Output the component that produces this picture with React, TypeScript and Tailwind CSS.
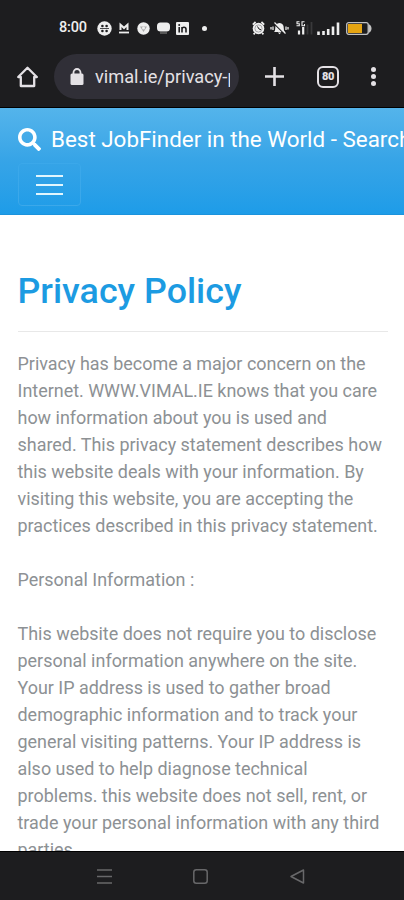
import React from 'react';
import { FaSearch } from 'react-icons/fa';

const paragraphs: string[][] = [
  [
    'Privacy has become a major concern on the',
    'Internet. WWW.VIMAL.IE knows that you care',
    'how information about you is used and',
    'shared. This privacy statement describes how',
    'this website deals with your information. By',
    'visiting this website, you are accepting the',
    'practices described in this privacy statement.',
  ],
  ['Personal Information :'],
  [
    'This website does not require you to disclose',
    'personal information anywhere on the site.',
    'Your IP address is used to gather broad',
    'demographic information and to track your',
    'general visiting patterns. Your IP address is',
    'also used to help diagnose technical',
    'problems. this website does not sell, rent, or',
    'trade your personal information with any third',
    'parties.',
  ],
];

const StatusBar: React.FC = () => (
  <div className="flex h-[54px] items-center pt-[2px] pl-[59px] text-[#eeeeee]">
    <span className="w-[38px] text-[14.5px] leading-none font-medium tracking-[-0.2px]">8:00</span>
    <svg className="h-[15px] w-[15px] shrink-0" viewBox="0 0 15 15">
      <circle cx="7.5" cy="7.5" r="7.2" fill="currentColor" />
      <g fill="#1d1d1f">
        <circle cx="5.4" cy="5" r="1.3" />
        <circle cx="9.6" cy="5" r="1.3" />
        <circle cx="5.4" cy="10" r="1.3" />
        <circle cx="9.6" cy="10" r="1.3" />
      </g>
      <path d="M3 7.5h9" stroke="#1d1d1f" strokeWidth="0.8" />
    </svg>
    <svg className="ml-[7px] h-[12px] w-[10px] shrink-0" viewBox="0 0 10 12">
      <path d="M0.5 8V0.500l4.5 4 4.5-4V8H7.500V5L5 7.500 2.500 5v3z" fill="currentColor" />
      <path d="M0 10.5h10" stroke="currentColor" strokeWidth="1.8" />
    </svg>
    <svg className="ml-[8px] h-[13px] w-[13px] shrink-0" viewBox="0 0 13 13">
      <circle cx="6.5" cy="6.5" r="6.2" fill="currentColor" />
      <path d="M3 4.500h7L6.500 10z" fill="#aaaaaa" />
      <circle cx="6.5" cy="6" r="1.5" fill="#eeeeee" />
    </svg>
    <svg className="ml-[7px] h-[13px] w-[13px] shrink-0" viewBox="0 0 13 13">
      <rect x="0" y="0.5" width="13" height="9" rx="3.5" fill="currentColor" />
      <path d="M3 11h7" stroke="#6a6a6a" strokeWidth="1.5" />
    </svg>
    <svg className="ml-[6px] h-[13px] w-[13px] shrink-0" viewBox="0 0 13 13">
      <rect width="13" height="13" rx="1" fill="currentColor" />
      <path d="M3.2 5v5.5M6 10.5V5M6 7c0-2.2 4-2.4 4 .2v3.3" fill="none" stroke="#1d1d1f" strokeWidth="1.6" />
      <circle cx="3.2" cy="2.9" r="1" fill="#1d1d1f" />
    </svg>
    <span className="ml-[13px] h-[5px] w-[5px] shrink-0 rounded-full bg-[#eeeeee]" />
    <svg className="ml-[45px] h-[14px] w-[13px] shrink-0" viewBox="0 0 13 14">
      <circle cx="6.5" cy="7.5" r="5.8" fill="currentColor" />
      <path d="M0.8 3.6L3.6 1M12.2 3.6L9.4 1M2.8 12l-1.2 1.3M10.2 12l1.2 1.3" stroke="currentColor" strokeWidth="1.8" />
      <path d="M5.500 5.500l1.500 2.500 2 .8" fill="none" stroke="#1d1d1f" strokeWidth="1" />
      <circle cx="6.5" cy="7.5" r="3.6" fill="none" stroke="#77777a" strokeWidth="0.6" />
    </svg>
    <svg className="ml-[5px] h-[14px] w-[19px] shrink-0" viewBox="0 0 19 14">
      <path d="M4 11c1.500-1 1-4 1.500-6S8 2 9.500 2s3.500 1 4 3 0 5 1.500 6zM7.800 11.500h3.400l-1.700 1.700z" fill="currentColor" />
      <path d="M4 2.500l10.500 10.500" stroke="#1d1d1f" strokeWidth="1.2" />
      <path d="M4.500 1.500L15.500 12.500M1 6v2.500M3 5.500v3.500M16 5.500v3.500M18 6v2.500" stroke="currentColor" strokeWidth="1.300" />
    </svg>
    <svg className="ml-[6px] h-[14px] w-[18px] shrink-0" viewBox="0 0 18 14">
      <path d="M4.500 .8H2v2h2.300v2H1.500M9.500 .8H7v4h2.500V3" fill="none" stroke="currentColor" strokeWidth="1.100" />
      <path d="M4 13.500v-4M8.200 13.500V6" stroke="currentColor" strokeWidth="2.200" />
      <path d="M12.500 13.500V3.500M16.500 13.500V1" stroke="#39393b" strokeWidth="1.800" />
    </svg>
    <svg className="ml-[4px] h-[13px] w-[23px] shrink-0" viewBox="0 0 23 13">
      <path d="M1.500 13V9.500M6.500 13V9M11.200 13V7M16 13V4.500M21 13V.5" stroke="currentColor" strokeWidth="2.600" />
    </svg>
    <svg className="ml-[6px] h-[13px] w-[26px] shrink-0" viewBox="0 0 26 13">
      <rect x="0.700" y="0.700" width="21.500" height="11.600" rx="2" fill="#1d1d1f" stroke="#c2c2c2" strokeWidth="1.300" />
      <rect x="2" y="2" width="14" height="9" fill="#e6a512" />
      <path d="M22.500 2c2 .8 3 2.500 3 4.500s-1 3.700-3 4.500z" fill="#c2c2c2" />
    </svg>
  </div>
);

const BrowserBar: React.FC = () => (
  <div className="flex h-[45px] items-center pl-[17px] text-[#e4e1e5]">
    <svg className="h-[22px] w-[21px] shrink-0" viewBox="0 0 21 22" fill="none" stroke="currentColor" strokeWidth="2.300">
      <path d="M1.200 11L10.500 1.800l9.300 9.200h-2.600v9H3.800v-9z" strokeLinejoin="round" />
    </svg>
    <div className="ml-[16px] flex h-[45px] w-[185px] shrink-0 items-center rounded-full bg-[#302f37] pl-[16px]">
      <svg className="h-[17px] w-[14px] shrink-0" viewBox="0 0 14 17">
        <rect x="0.500" y="5.500" width="13" height="11.500" rx="1.500" fill="currentColor" />
        <path d="M3.500 7V4.500a3.500 3.500 0 0 1 7 0V7" fill="none" stroke="currentColor" strokeWidth="1.800" />
      </svg>
      <span className="ml-[11px] w-[135px] overflow-hidden text-[18.200px] leading-[28px] whitespace-nowrap">
        vimal.ie/privacy-p
      </span>
    </div>
    <svg className="ml-[26px] h-[19px] w-[19px] shrink-0" viewBox="0 0 19 19">
      <path d="M9.500 0v19M0 9.500h19" stroke="currentColor" strokeWidth="2.600" />
    </svg>
    <div className="ml-[33px] flex h-[22px] w-[22px] shrink-0 items-center justify-center rounded-[6px] border-2 border-[#e4e1e5] text-[11px] leading-none font-black tracking-[-0.3px]">
      80
    </div>
    <div className="ml-[32px] flex flex-col gap-[2px]">
      <span className="h-[5px] w-[5px] rounded-full bg-[#e4e1e5]" />
      <span className="h-[5px] w-[5px] rounded-full bg-[#e4e1e5]" />
      <span className="h-[5px] w-[5px] rounded-full bg-[#e4e1e5]" />
    </div>
  </div>
);

const SiteHeader: React.FC = () => (
  <header className="h-[107px] border-b border-[#1c93dc] bg-gradient-to-b from-[#54b4eb] via-[#36a4e7] to-[#1d9ce8] pt-[14px] pl-[18px] text-white">
    <div className="flex h-[34px] items-center whitespace-nowrap">
      <FaSearch className="h-[23px] w-[23px] shrink-0" />
      <span className="ml-[10px] text-[22.400px] leading-none">Best JobFinder in the World - Search</span>
    </div>
    <button className="mt-[7px] flex h-[43px] w-[63px] flex-col items-center justify-center gap-[7px] rounded border border-[#3ba8ea]">
      <span className="h-[2px] w-[27px] bg-[#e2f6fe]" />
      <span className="h-[2px] w-[27px] bg-[#e2f6fe]" />
      <span className="h-[2px] w-[27px] bg-[#e2f6fe]" />
    </button>
  </header>
);

const App: React.FC = () => {
  return (
    <div className="flex h-[900px] w-[404px] flex-col overflow-hidden bg-white font-['Roboto',sans-serif]">
      <div className="h-[108px] shrink-0 border-b border-black bg-[#1d1d1f]">
        <StatusBar />
        <BrowserBar />
      </div>
      <div className="h-[743px] shrink-0 overflow-hidden">
        <SiteHeader />
        <main className="pr-4 pl-[17.500px]">
          <h1 className="pt-[55px] text-[35.800px] leading-[43px] font-medium text-[#1c9be2]">Privacy Policy</h1>
          <hr className="mt-[18px] mb-[18px] border-[#e8e8e8]" />
          {paragraphs.map((lines, index) => (
            <p
              key={index}
              className="mb-[27px] text-[17.950px] leading-[27px] whitespace-nowrap text-[#8d9194]"
            >
              {lines.map((line) => (
                <span key={line} className="block">
                  {line}
                </span>
              ))}
            </p>
          ))}
        </main>
      </div>
      <nav className="flex h-[49px] shrink-0 items-center border-t border-black bg-[#1d1d1f] pl-[97px] text-[#68686a]">
        <svg className="h-[15px] w-[15px]" viewBox="0 0 15 15" stroke="currentColor" strokeWidth="1.300">
          <path d="M0 1h15M0 7.500h15M0 14h15" />
        </svg>
        <svg className="ml-[81px] h-[15px] w-[15px]" viewBox="0 0 15 15" fill="none" stroke="currentColor" strokeWidth="1.500">
          <rect x="0.800" y="0.800" width="13.400" height="13.400" rx="2.500" />
        </svg>
        <svg className="ml-[82px] h-[15px] w-[15px]" viewBox="0 0 15 15" fill="none" stroke="currentColor" strokeWidth="1.500">
          <path d="M1 7.500L13.500 1v13z" strokeLinejoin="round" />
        </svg>
      </nav>
    </div>
  );
};

export default App;
